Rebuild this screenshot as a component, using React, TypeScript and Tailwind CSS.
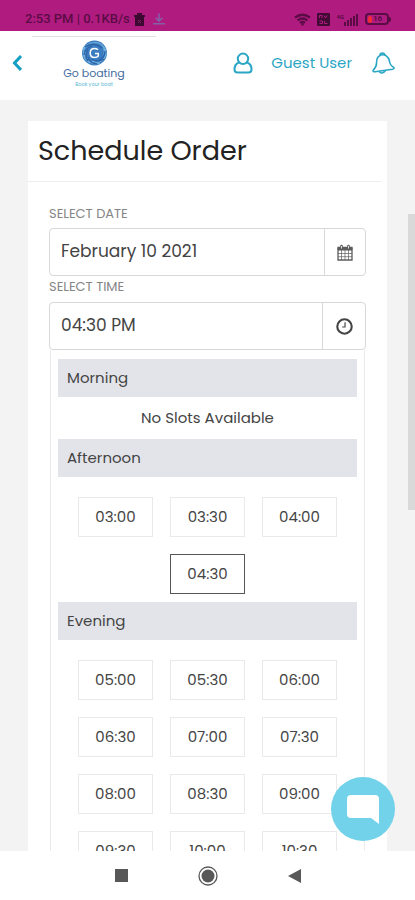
import { useState } from "react";

const periods = [
  { name: "Morning", slots: [] },
  { name: "Afternoon", slots: ["03:00", "03:30", "04:00", "04:30"] },
  {
    name: "Evening",
    slots: [
      "05:00",
      "05:30",
      "06:00",
      "06:30",
      "07:00",
      "07:30",
      "08:00",
      "08:30",
      "09:00",
      "09:30",
      "10:00",
      "10:30",
    ],
  },
];

function StatusBar() {
  return (
    <div className="flex h-[31px] shrink-0 items-end justify-between bg-[#b01b80] pr-6 pb-1 pl-[25px] font-['Roboto',sans-serif] text-[#5a0c45]">
      <div className="flex items-center gap-1">
        <span className="text-[13px] leading-4 font-medium">
          2:53 PM | 0.1KB/s
        </span>
        <svg width="11" height="13" viewBox="0 0 11 13" fill="#3c0a30">
          <path d="M0 2h3V0h5v2h3v2H0zM1 4h9v9H1z" />
          <path d="M4 7l3 3M7 7l-3 3" stroke="#8a1a68" />
        </svg>
        <svg
          className="ml-1"
          width="12"
          height="12"
          viewBox="0 0 14 13"
          fill="none"
          stroke="#8560a8"
          strokeWidth="1.8"
        >
          <path d="M7 0v9M3 5L7 9l4-4M0 12h14" />
        </svg>
      </div>
      <div className="flex h-4 items-center gap-[6px]">
        <svg
          width="17"
          height="13"
          viewBox="0 0 17 13"
          fill="none"
          stroke="currentColor"
          strokeWidth="2.2"
        >
          <path d="M1 4.500Q8.500-1 16 4.500M3.500 7.500Q8.500 3.500 13.500 7.500M6 10Q8.500 8 11 10" />
          <circle cx="8.500" cy="11.500" r="1.200" fill="currentColor" stroke="none" />
        </svg>
        <svg width="13" height="13" viewBox="0 0 13 13">
          <rect width="13" height="13" rx="1" fill="#430a35" />
          <path
            d="M2.500 5V2.500h2.500V5M7 2.500l1.500 2.500L10 2.500M2.500 8h3v2.500h-3M7.500 8v2.500h3"
            fill="none"
            stroke="#b01b80"
          />
        </svg>
        <div className="flex items-end">
          <span className="self-start text-[6px] leading-[7px] font-bold">
            4G
          </span>
          <svg width="15" height="13" viewBox="0 0 15 13" fill="currentColor">
            <path d="M0 9h2v4H0zM3 7h2v6H3zM6 5h2v8H6zM9 3h2v10H9zM12 1h2v12h-2z" />
          </svg>
        </div>
        <div className="flex items-center">
          <div className="flex h-3 w-6 items-center gap-px rounded border-2 border-current pl-px text-[8px] leading-[8px] font-bold">
            <span className="h-[7px] w-1 rounded-sm bg-[#f52a35]" />
            <span>16</span>
          </div>
          <span className="h-[5px] w-[2px] rounded-r-sm bg-current" />
        </div>
      </div>
    </div>
  );
}

function Logo() {
  return (
    <a href="#" className="flex w-16 flex-col items-center">
      <svg width="27" height="26" viewBox="0 0 27 26" fill="none">
        <circle cx="13.500" cy="13" r="12.500" fill="#3b7dc0" />
        <path
          d="M2 9Q8 1 18 3M4 19Q-1 9 9 4M9 23Q1 19 5 11M19 23Q10 26 6 18M24 17Q19 25 11 21M23 7Q28 15 20 21M17 3Q25 5 23 15"
          stroke="#6fb0df"
          strokeWidth="1.200"
        />
        <path
          d="M4 7Q12 1 21 8M3 15Q4 8 11 6M7 21Q3 16 7 10M16 24Q8 23 7 17M23 19Q17 23 11 19M24 11Q24 18 18 20"
          stroke="#2c62a6"
          strokeWidth="1.300"
        />
        <path
          d="M17 9.800Q15.500 8.500 13.500 8.500C10.800 8.500 9.200 10.500 9.200 13S10.800 17.500 13.500 17.500Q16 17.500 17.300 16V13.400H14"
          stroke="white"
          strokeWidth="1.500"
        />
      </svg>
      <span className="text-[11px] leading-[15px] whitespace-nowrap text-[#3f6a9f]">
        Go boating
      </span>
      <span className="text-[5px] leading-[8px] whitespace-nowrap text-[#55b5d3]">
        Book your boat
      </span>
    </a>
  );
}

function Header() {
  return (
    <header className="h-[69px] shrink-0 bg-white text-[#2ba6c5]">
      <div className="mt-[5px] ml-8 h-px w-[124px] bg-[#e3dfe2]" />
      <div className="flex items-start pr-5 pl-3">
        <button aria-label="Back" className="mt-[18px]">
          <svg
            width="10"
            height="16"
            viewBox="0 0 10 16"
            fill="none"
            stroke="#169fc4"
            strokeWidth="3"
          >
            <path d="M9 1L2.500 8 9 15" />
          </svg>
        </button>
        <div className="mt-[3px] ml-10">
          <Logo />
        </div>
        <div className="mt-[14px] ml-auto flex items-center">
          <svg
            width="20"
            height="22"
            viewBox="0 0 20 22"
            fill="none"
            stroke="currentColor"
            strokeWidth="2"
          >
            <circle cx="10" cy="6.800" r="5.200" />
            <path d="M6 10.500C3 11.500 1.500 14 1.500 17.500Q1.500 20.500 4.500 20.500H15.500Q18.500 20.500 18.500 17.500C18.500 14 17 11.500 14 10.500" />
          </svg>
          <a href="#" className="ml-[18px] text-[15px] leading-6">
            Guest User
          </a>
          <button aria-label="Notifications" className="ml-5">
            <svg
              width="23"
              height="24"
              viewBox="0 0 23 24"
              fill="none"
              stroke="currentColor"
              strokeWidth="1.600"
              strokeLinejoin="round"
            >
              <path d="M9 4C5.500 5.200 4.500 8 4.600 11.500C4.700 15 3.500 17 1 19.500Q1 21 3 20.700L20.500 18.300Q22.500 17.800 21.800 16.500C18.800 15 17.800 13 17.300 9.500C16.500 6 13.500 3 9 4Z" />
              <path d="M8 4.200Q8 2 10.300 2T13 4.500M7 20.500Q10 24 13.500 19.500" />
            </svg>
          </button>
        </div>
      </div>
    </header>
  );
}

function CalendarIcon() {
  return (
    <svg
      width="16"
      height="17"
      viewBox="0 0 16 17"
      fill="none"
      stroke="#5c5c5c"
    >
      <path d="M1 3.500h14v12.500H1z" strokeWidth="1.300" />
      <path d="M1 4h14v2H1z" fill="#5c5c5c" />
      <path
        d="M4.500 6v10M8 6v10M11.500 6v10M1 9.500h14M1 12.700h14"
        strokeWidth="0.700"
      />
      <path d="M4.500 2v3M11.500 2v3" strokeWidth="2.600" strokeLinecap="round" />
      <path d="M4.500 2v2.500M11.500 2v2.500" stroke="white" strokeWidth="0.800" />
    </svg>
  );
}

function ClockIcon() {
  return (
    <svg
      width="17"
      height="17"
      viewBox="0 0 16 16"
      fill="none"
      stroke="#444"
    >
      <circle cx="8" cy="8" r="6.800" strokeWidth="2" />
      <path d="M8.500 4v4.500H5.800" strokeWidth="1.100" />
    </svg>
  );
}

export default function App() {
  const [date, setDate] = useState("February 10 2021");
  const [time, setTime] = useState("04:30");

  return (
    <div className="flex h-screen flex-col bg-white font-['Poppins','Inter',sans-serif] text-[#444]">
      <StatusBar />
      <Header />

      <main className="relative min-h-0 flex-1 overflow-hidden bg-[#f3f3f3]">
        <section className="mx-7 mt-[21px] bg-white">
          <h1 className="pt-3 pb-3 pl-[10px] text-[27px] leading-9 text-[#222]">
            Schedule Order
          </h1>
          <hr className="mr-[6px] border-[#ededed]" />

          <div className="px-[21px] pt-6">
            <label
              htmlFor="date"
              className="block pb-[6px] text-[13px] leading-4 text-[#858585]"
            >
              SELECT DATE
            </label>
            <div className="flex h-12 rounded border border-[#d8d8d8]">
              <input
                id="date"
                value={date}
                onChange={(e) => setDate(e.target.value)}
                className="min-w-0 flex-1 pl-[11px] text-[17px] outline-none"
              />
              <button
                aria-label="Open calendar"
                className="flex w-[41px] items-center justify-center border-l border-[#d8d8d8]"
              >
                <CalendarIcon />
              </button>
            </div>

            <label
              htmlFor="time"
              className="block pt-[3px] pb-[7px] text-[13px] leading-4 text-[#858585]"
            >
              SELECT TIME
            </label>
            <div className="flex h-12 rounded border border-[#d8d8d8]">
              <input
                id="time"
                readOnly
                value={`${time} PM`}
                className="min-w-0 flex-1 pl-[11px] text-[17px] outline-none"
              />
              <button
                aria-label="Choose time"
                className="flex w-[43px] items-center justify-center border-l border-[#d8d8d8]"
              >
                <ClockIcon />
              </button>
            </div>

            <div className="mx-px border-x border-[#ebebeb] px-[7px] pt-[9px] pb-2">
              {periods.map((period) => (
                <div key={period.name}>
                  <h2 className="bg-[#e3e4ea] pl-[9px] text-[15px] leading-[38px]">
                    {period.name}
                  </h2>
                  {period.slots.length === 0 ? (
                    <p className="text-center text-[15px] leading-[42px]">
                      No Slots Available
                    </p>
                  ) : (
                    <div className="flex flex-wrap justify-center gap-[17px] pt-5 pb-2">
                      {period.slots.map((slot) => (
                        <button
                          key={slot}
                          onClick={() => setTime(slot)}
                          className={`h-10 w-[75px] border text-[15px] ${
                            slot === time
                              ? "border-[#555]"
                              : "border-[#e9e9e9]"
                          }`}
                        >
                          {slot}
                        </button>
                      ))}
                    </div>
                  )}
                </div>
              ))}
            </div>
          </div>
        </section>

        {/* scroll thumb */}
        <div className="absolute top-[114px] right-0 h-[296px] w-[7px] bg-[#d9d9d9]" />

        <button
          aria-label="Chat"
          className="absolute right-5 bottom-[10px] flex size-16 items-center justify-center rounded-full bg-[#71d2ea]"
        >
          <svg width="32" height="30" viewBox="0 0 32 30" fill="white">
            <path d="M4 1H28Q32 1 32 5V30L24 24H4Q0 24 0 20V5Q0 1 4 1Z" />
          </svg>
        </button>
      </main>

      <nav className="flex h-[49px] shrink-0 items-center justify-center gap-[70px] bg-white text-[#585858]">
        <button aria-label="Recent apps">
          <svg width="13" height="13" viewBox="0 0 13 13" fill="currentColor">
            <rect width="13" height="13" />
          </svg>
        </button>
        <button aria-label="Home">
          <svg width="20" height="20" viewBox="0 0 20 20">
            <circle
              cx="10"
              cy="10"
              r="9"
              fill="none"
              stroke="currentColor"
              strokeWidth="1.300"
            />
            <circle cx="10" cy="10" r="6.500" fill="currentColor" />
          </svg>
        </button>
        <button aria-label="Back to previous app">
          <svg width="13" height="14" viewBox="0 0 13 14" fill="currentColor">
            <path d="M13 0V14L0 7Z" />
          </svg>
        </button>
      </nav>
    </div>
  );
}
